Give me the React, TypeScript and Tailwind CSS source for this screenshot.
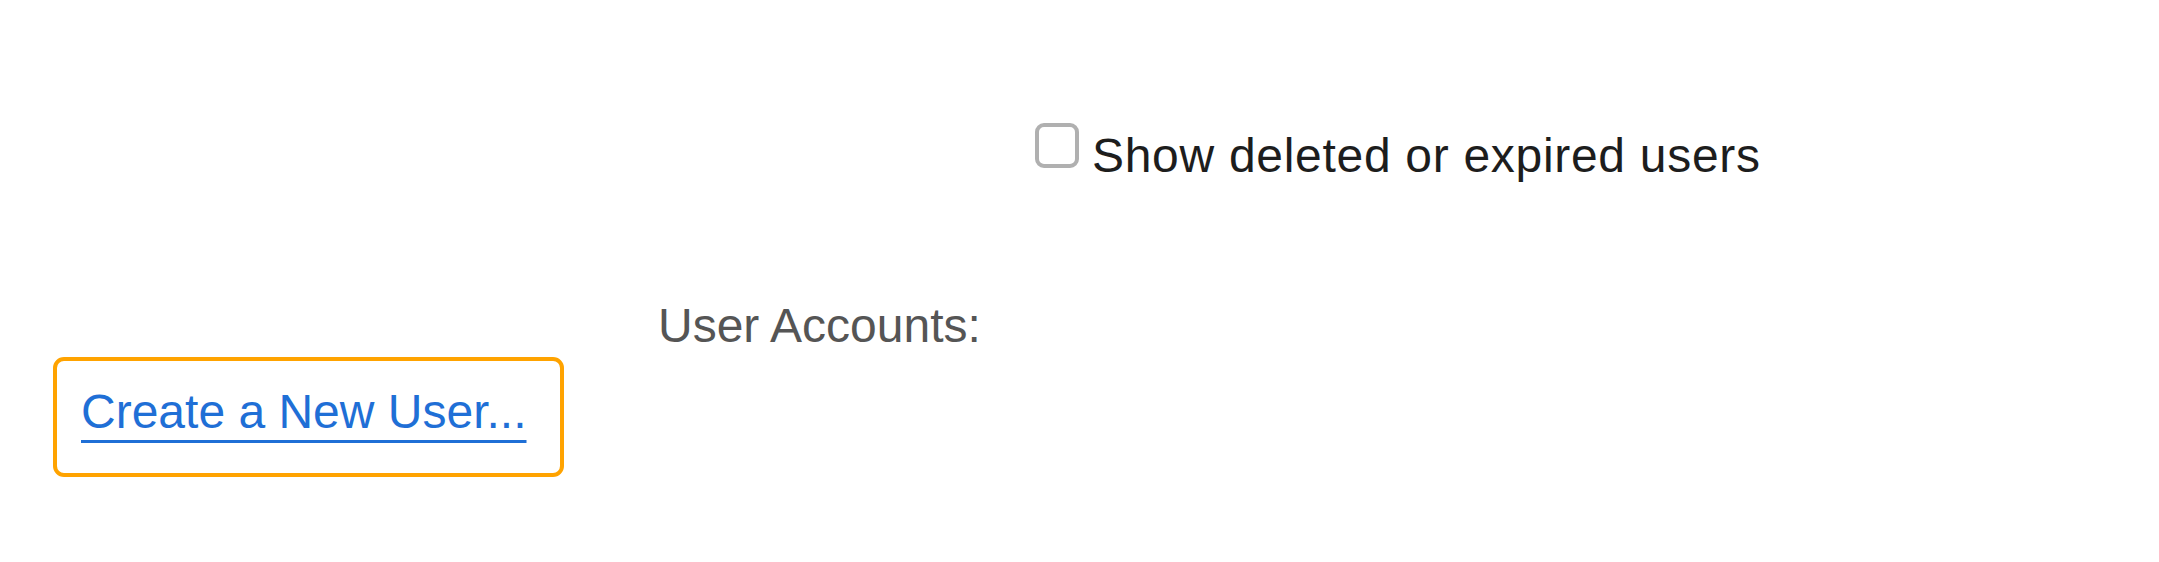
import { useState } from 'react'

export default function App() {
  const [showDeleted, setShowDeleted] = useState(false)
  return (
    <div className="w-full h-[562px] bg-white font-['Liberation_Sans',Arial,sans-serif] text-[48px] leading-none">
      {/* filter */}
      <div className="pt-[123px] pl-[1035px]">
        <label className="flex items-start gap-[13px] cursor-pointer select-none">
          <span
            onClick={() => setShowDeleted(!showDeleted)}
            className={`w-[44px] h-[45px] shrink-0 rounded-[9px] border-[4px] border-[#b0b0b0] ${showDeleted ? 'bg-[#1f6fd6]' : 'bg-white'}`}
          />
          <span className="mt-[9px] text-[#1d1d1d] tracking-[0.7px] whitespace-nowrap">Show deleted or expired users</span>
        </label>
      </div>

      <div className="mt-[122px] pl-[658px] text-[#555555] whitespace-nowrap">User Accounts:</div>

      <div className="mt-[7px] ml-[53px] w-[511px] h-[120px] rounded-[11px] border-[4px] border-[#ffa300] pl-[24px] pt-[27px]">
        <a
          href="#"
          className="text-[#1f6fd6] underline decoration-[3px] underline-offset-[12px] whitespace-nowrap"
        >
          Create a New User...
        </a>
      </div>
    </div>
  )
}
